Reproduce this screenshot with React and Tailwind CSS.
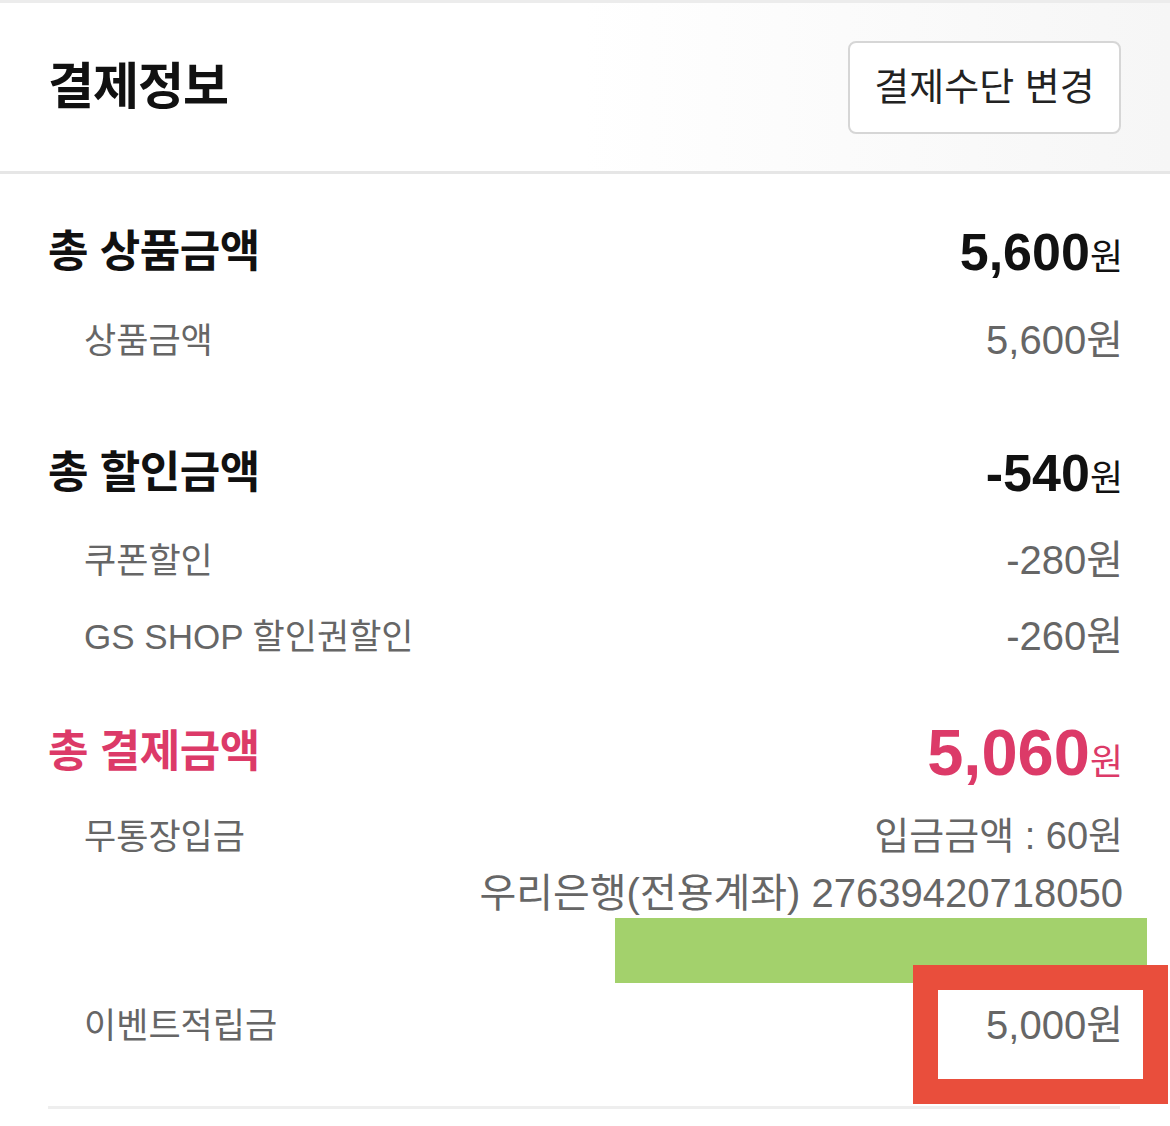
const font = { fontFamily: '"Liberation Sans", "Noto Sans CJK KR", sans-serif' }

function HeadRow({ label, amount, pink, mt }) {
  const color = pink ? "text-[#dc3a68]" : "text-[#111]"
  return (
    <div className={`flex h-[60px] items-center justify-between ${mt} ${color}`}>
      <span className="text-[44px] font-bold leading-none tracking-[-0.5px]">{label}</span>
      <span className="flex items-baseline leading-none">
        <span className={`${pink ? "text-[65px]" : "text-[52px]"} font-bold`}>{amount}</span>
        <span className="text-[36px] font-normal">원</span>
      </span>
    </div>
  )
}

function SubRow({ label, value, mt }) {
  return (
    <div className={`flex h-[76px] items-center justify-between pl-[36px] text-[#666] ${mt}`}>
      <span className="text-[35px] leading-none">{label}</span>
      <span className="text-[40px] leading-none">{value}</span>
    </div>
  )
}

export default function App() {
  return (
    <div className="relative h-[1126px] w-[1170px] overflow-hidden bg-white" style={font}>
      {/* header */}
      <div className="flex h-[174px] items-center justify-between border-t-[3px] border-b-[3px] border-t-[#ececec] border-b-[#e6e6e6] bg-gradient-to-r from-white via-white to-[#f6f6f6] pl-[48px] pr-[49px]">
        <h1 className="text-[50px] font-bold leading-none text-[#111] tracking-[-1px]">결제정보</h1>
        <button className="flex h-[93px] w-[273px] items-center justify-center rounded-[8px] border-2 border-[#d6d6d6] bg-white text-[38px] leading-none text-[#222]">
          결제수단 변경
        </button>
      </div>

      <div className="flex flex-col pl-[48px] pr-[47px]">
        <HeadRow label="총 상품금액" amount="5,600" mt="mt-[48px]" />
        <SubRow label="상품금액" value="5,600원" mt="mt-[20px]" />

        <HeadRow label="총 할인금액" amount="-540" mt="mt-[65px]" />
        <SubRow label="쿠폰할인" value="-280원" mt="mt-[19px]" />
        <SubRow label="GS SHOP 할인권할인" value="-260원" />

        <HeadRow label="총 결제금액" amount="5,060" pink mt="mt-[48px]" />

        <div className="mt-[16px] flex justify-between pl-[36px] text-[#666]">
          <span className="flex h-[76px] items-center text-[35px] leading-none">무통장입금</span>
          <div className="flex flex-col items-end">
            <span className="flex h-[76px] items-center text-[38px] leading-none">입금금액 : 60원</span>
            <span className="flex h-[38px] items-center text-[40px] leading-none">우리은행(전용계좌) 27639420718050</span>
          </div>
        </div>

        <SubRow label="이벤트적립금" value="5,000원" mt="mt-[75px]" />

        <div className="mr-[3px] mt-[43px] h-[3px] bg-[#eeeeee]" />
      </div>

      {/* annotation overlays */}
      <div className="absolute left-[615px] top-[918px] h-[65px] w-[532px] bg-[#a3d16c]" />
      <div className="absolute left-[913px] top-[965px] h-[139px] w-[255px] border-[25px] border-[#e94e3c]" />
    </div>
  )
}
